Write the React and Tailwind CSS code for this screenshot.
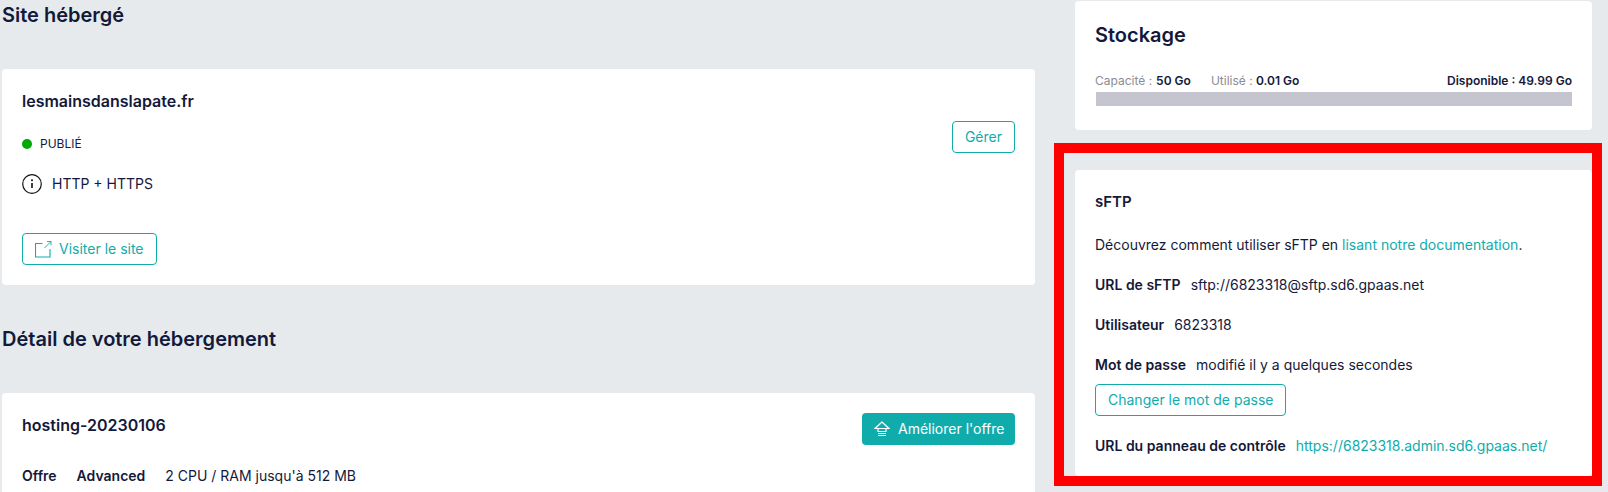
const ink = 'text-[#14193a]';

function ExternalIcon() {
  return (
    <svg width="17" height="17" viewBox="0 0 17 17" fill="none" stroke="currentColor" strokeWidth="1.1" className="shrink-0">
      <path d="M7.500 2.500H.5V16H15V8" />
      <path d="M9.500 7 16 .5M12 .5h4v4" strokeWidth="0.9" />
    </svg>
  );
}

function UpgradeIcon() {
  return (
    <svg width="16" height="16" viewBox="0 0 16 16" fill="none" stroke="currentColor" strokeWidth="1.2" className="shrink-0">
      <path d="M8 1 1 7.500h14L8 1Z" />
      <path d="M4 7.500V10.500h8V7.500M4 12.500h8M4 14.500h8" />
    </svg>
  );
}

function InfoIcon() {
  return (
    <svg width="20" height="20" viewBox="0 0 20 20" fill="none" className="shrink-0 text-[#111]">
      <circle cx="10" cy="10" r="9.300" stroke="currentColor" strokeWidth="1.200" />
      <path d="M10 9v5" stroke="currentColor" strokeWidth="1.600" />
      <circle cx="10" cy="6.300" r="1" fill="currentColor" />
    </svg>
  );
}

function OutlineButton({ children, className = '' }) {
  return (
    <button
      type="button"
      className={`h-8 rounded-[4px] border border-[#10acac] px-3 text-sm text-[#10acac] flex items-center ${className}`}
    >
      {children}
    </button>
  );
}

function Field({ label, children }) {
  return (
    <p className={`text-sm leading-5 whitespace-nowrap ${ink}`}>
      <span className="font-semibold mr-[10px]">{label}</span>
      {children}
    </p>
  );
}

export default function App() {
  return (
    <div
      className={`relative h-[492px] overflow-hidden bg-[#e6eaed] flex items-start ${ink}`}
      style={{ fontFamily: 'Inter, sans-serif' }}
    >
      <div className="ml-[2px] w-[1033px] shrink-0">
        <h2 className="text-xl leading-[30px] font-semibold">Site hébergé</h2>

        <div className="mt-[39px] h-[216px] rounded-[4px] bg-white px-5 pt-5 flex justify-between">
          <div>
            <h3 className="text-base leading-6 font-semibold">lesmainsdanslapate.fr</h3>
            <div className="mt-[21px] flex items-center gap-2 text-xs leading-5">
              <span className="w-[10px] h-[10px] rounded-full bg-[#00a900]" />
              PUBLIÉ
            </div>
            <div className="mt-5 flex items-center gap-[10px] text-sm leading-5">
              <InfoIcon />
              HTTP + HTTPS
            </div>
            <OutlineButton className="mt-[39px] gap-[7px]">
              <ExternalIcon />
              Visiter le site
            </OutlineButton>
          </div>
          <OutlineButton className="mt-[32px]">Gérer</OutlineButton>
        </div>

        <h2 className="mt-[39px] text-xl leading-[30px] font-semibold">Détail de votre hébergement</h2>

        <div className="mt-[39px] rounded-[4px] bg-white px-5 pt-5 pb-5">
          <div className="flex justify-between items-start">
            <h3 className="text-base leading-6 font-semibold">hosting-20230106</h3>
            <button
              type="button"
              className="h-8 w-[153px] rounded-[4px] bg-[#10acac] px-3 text-sm text-white whitespace-nowrap flex items-center gap-2"
            >
              <UpgradeIcon />
              Améliorer l'offre
            </button>
          </div>
          <p className="mt-[21px] text-sm leading-5">
            <span className="font-semibold mr-5">Offre</span>
            <span className="font-semibold mr-5">Advanced</span>
            2 CPU / RAM jusqu'à 512 MB
          </p>
        </div>
      </div>

      <div className="ml-10 w-[517px] shrink-0 mt-px">
        <div className="h-[129px] rounded-[4px] bg-white px-5 pt-[19px]">
          <h2 className="text-xl leading-[30px] font-semibold">Stockage</h2>
          <div className="mt-[23px] flex justify-between text-xs leading-4">
            <div className="text-[#8c8c94]">
              Capacité :<span className={`ml-1 font-semibold mr-5 ${ink}`}>50 Go</span>
              Utilisé :&nbsp;<span className={`font-semibold ${ink}`}>0.01 Go</span>
            </div>
            <span className="font-semibold">Disponible : 49.99 Go</span>
          </div>
          <div className="mt-[3px] ml-px h-[14px] bg-[#c4c5ce]" />
        </div>

        <div className="mt-10 rounded-[4px] bg-white px-5 pt-[22px] pb-5">
          <h3 className="text-[15px] leading-5 font-semibold">sFTP</h3>
          <p className="mt-[23px] text-sm leading-5">
            Découvrez comment utiliser sFTP en <a className="text-[#10acac]">lisant notre documentation</a>.
          </p>
          <div className="mt-5">
            <Field label="URL de sFTP">sftp://6823318@sftp.sd6.gpaas.net</Field>
          </div>
          <div className="mt-5">
            <Field label="Utilisateur">6823318</Field>
          </div>
          <div className="mt-5">
            <Field label="Mot de passe">modifié il y a quelques secondes</Field>
          </div>
          <OutlineButton className="mt-[9px]">Changer le mot de passe</OutlineButton>
          <div className="mt-5">
            <Field label="URL du panneau de contrôle">
              <a className="text-[#10acac]">https://6823318.admin.sd6.gpaas.net/</a>
            </Field>
          </div>
        </div>
      </div>

      {/* annotation frame drawn over the screenshot */}
      <div className="absolute left-[1054px] top-[143px] w-[548px] h-[343px] border-[10px] border-[#ff0000] pointer-events-none" />
    </div>
  );
}
